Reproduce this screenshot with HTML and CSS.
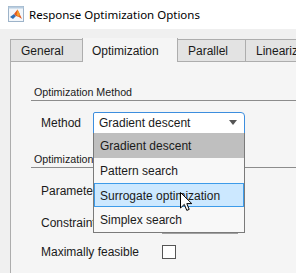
FILE: index.html
```html
<!DOCTYPE html>
<html lang="en">
<head>
    <meta charset="UTF-8">
    <title>Response Optimization Options</title>
    <link rel="stylesheet" href="styles.css">
</head>
<body>
    <div class="titlebar">
        <svg class="app-icon" width="16" height="16" viewBox="0 0 16 16">
            <rect x="0.5" y="0.5" width="15" height="15" fill="#f3f7fb" stroke="#9db3c9"/>
            <rect x="0.5" y="0.5" width="15" height="2" fill="#b9cde0"/>
            <path d="M2 11 L6 8 L8 10 L5 13 Z" fill="#2f6fb3"/>
            <path d="M6 8 L9.5 3.5 L14 13 L11 11 L8 10 Z" fill="#e2571e"/>
            <path d="M9.5 3.5 L12 8 L11 11 L8.5 9 Z" fill="#f49a2c"/>
        </svg>
        <span class="title">Response Optimization Options</span>
    </div>

    <div class="window">
        <div class="tabs">
            <div class="tab tab-general">General</div>
            <div class="tab tab-active tab-opt">Optimization</div>
            <div class="tab tab-parallel">Parallel</div>
            <div class="tab tab-lin">Linearization</div>
        </div>

        <div class="panel">
            <div class="section-title first">Optimization Method</div>

            <div class="row row-method">
                <span class="label">Method</span>
                <div class="select">
                    <span class="select-text">Gradient descent</span>
                    <span class="arrow"></span>
                    <ul class="options">
                        <li class="option current">Gradient descent</li>
                        <li class="option">Pattern search</li>
                        <li class="option hover">Surrogate optimization</li>
                        <li class="option">Simplex search</li>
                    </ul>
                    <svg class="cursor" width="13" height="20" viewBox="0 0 13 20">
                        <path d="M0.5 0.5 L0.5 16 L4.3 12.4 L6.8 18.4 L9.2 17.4 L6.8 11.6 L11.8 11.6 Z" fill="#fff" stroke="#000" stroke-width="1"/>
                    </svg>
                </div>
            </div>

            <div class="section-title second"><span class="clip-title">Optimization Options</span></div>

            <div class="row row-param">
                <span class="label">Parameter tolerance</span>
                <span class="field"></span>
            </div>
            <div class="row row-constr">
                <span class="label">Constraint tolerance</span>
                <span class="field"></span>
            </div>
            <div class="row row-feasible">
                <span class="label">Maximally feasible</span>
                <span class="checkbox"></span>
            </div>
        </div>
    </div>
</body>
</html>
```

FILE: styles.css
```css
body {
    margin: 0;
    width: 296px;
    height: 273px;
    overflow: hidden;
    font-family: "Liberation Sans", Arial, sans-serif;
    font-size: 12px;
    color: #1a1a1a;
    background-color: #f0f0f0;
}

.titlebar {
    height: 29px;
    background-color: #fff;
    display: flex;
    align-items: center;
    padding-left: 8px;
    gap: 5px;
}

.app-icon {
    margin-top: -2px;
}

.title {
    font-family: "Noto Sans", sans-serif;
    font-size: 11.5px;
    color: #000;
}

.window {
    padding: 9px 0 0 10px;
    height: 235px;
    overflow: hidden;
}

.tabs {
    display: flex;
    align-items: flex-end;
    height: 24px;
    overflow: hidden;
}

.tab {
    flex-shrink: 0;
    box-sizing: border-box;
    height: 23px;
    line-height: 22px;
    padding-left: 10px;
    background-color: #e3e3e3;
    border: 1px solid #adadad;
    margin-left: -1px;
    white-space: nowrap;
}

.tab-general {
    margin-left: 0;
    width: 73px;
}

.tab-active {
    height: 25px;
    line-height: 26px;
    background-color: #f5f5f5;
    border-bottom: none;
    padding-left: 9px;
}

.tab-opt {
    width: 96px;
}

.tab-parallel {
    width: 69px;
}

.tab-lin {
    width: 100px;
}

.panel {
    display: flow-root;
    box-sizing: border-box;
    height: 211px;
    border-left: 1px solid #adadad;
    background-color: #f5f5f5;
    padding-left: 20px;
}

.section-title {
    height: 16px;
    line-height: 16px;
    padding-left: 3px;
    font-size: 10.7px;
    border-bottom: 1px solid #8c8c8c;
    white-space: nowrap;
}

.section-title.first {
    margin-top: 22px;
}

.section-title.second {
    margin-top: 17px;
}

.clip-title {
    display: inline-block;
    width: 59px;
    overflow: hidden;
    vertical-align: top;
}

.row {
    display: flex;
    align-items: center;
    padding-left: 10px;
    white-space: nowrap;
}

.label {
    flex-shrink: 0;
    width: 52px;
    overflow: hidden;
}

.row-method {
    margin-top: 11px;
}

.row-param {
    margin-top: 12px;
}

.row-constr {
    margin-top: 10px;
}

.row-feasible {
    margin-top: 11px;
    height: 14px;
}

.row-feasible .label {
    width: 121px;
}

.select {
    position: relative;
    box-sizing: border-box;
    width: 152px;
    height: 22px;
    border: 1px solid #3d8ede;
    border-radius: 2px 4px 0 0;
    background-color: #fff;
    display: flex;
    align-items: center;
    padding-left: 5px;
}

.arrow {
    position: absolute;
    right: 7px;
    top: 7px;
    width: 0;
    height: 0;
    border-left: 4px solid transparent;
    border-right: 4px solid transparent;
    border-top: 5px solid #555;
}

.options {
    position: absolute;
    left: -1px;
    top: 20px;
    box-sizing: border-box;
    width: 152px;
    margin: 0;
    padding: 0;
    list-style: none;
    background-color: #f8f8f8;
    border: 1px solid #7a7a7a;
    border-top: none;
    z-index: 2;
}

.option {
    box-sizing: border-box;
    height: 24.75px;
    line-height: 24px;
    padding-left: 5px;
    border: 1px solid transparent;
}

.option.current {
    background-color: #bfbfbf;
    border-color: #bfbfbf;
}

.option.hover {
    background-color: #cce8ff;
    border-color: #3d9be9;
}

.cursor {
    position: absolute;
    left: 86px;
    top: 79px;
    z-index: 3;
}

.field {
    box-sizing: border-box;
    width: 76px;
    height: 22px;
    margin-left: 69px;
    background-color: #fff;
    border: 1px solid #a0a0a0;
}

.checkbox {
    box-sizing: border-box;
    width: 14px;
    height: 14px;
    background-color: #fff;
    border: 1px solid #555;
}
```
